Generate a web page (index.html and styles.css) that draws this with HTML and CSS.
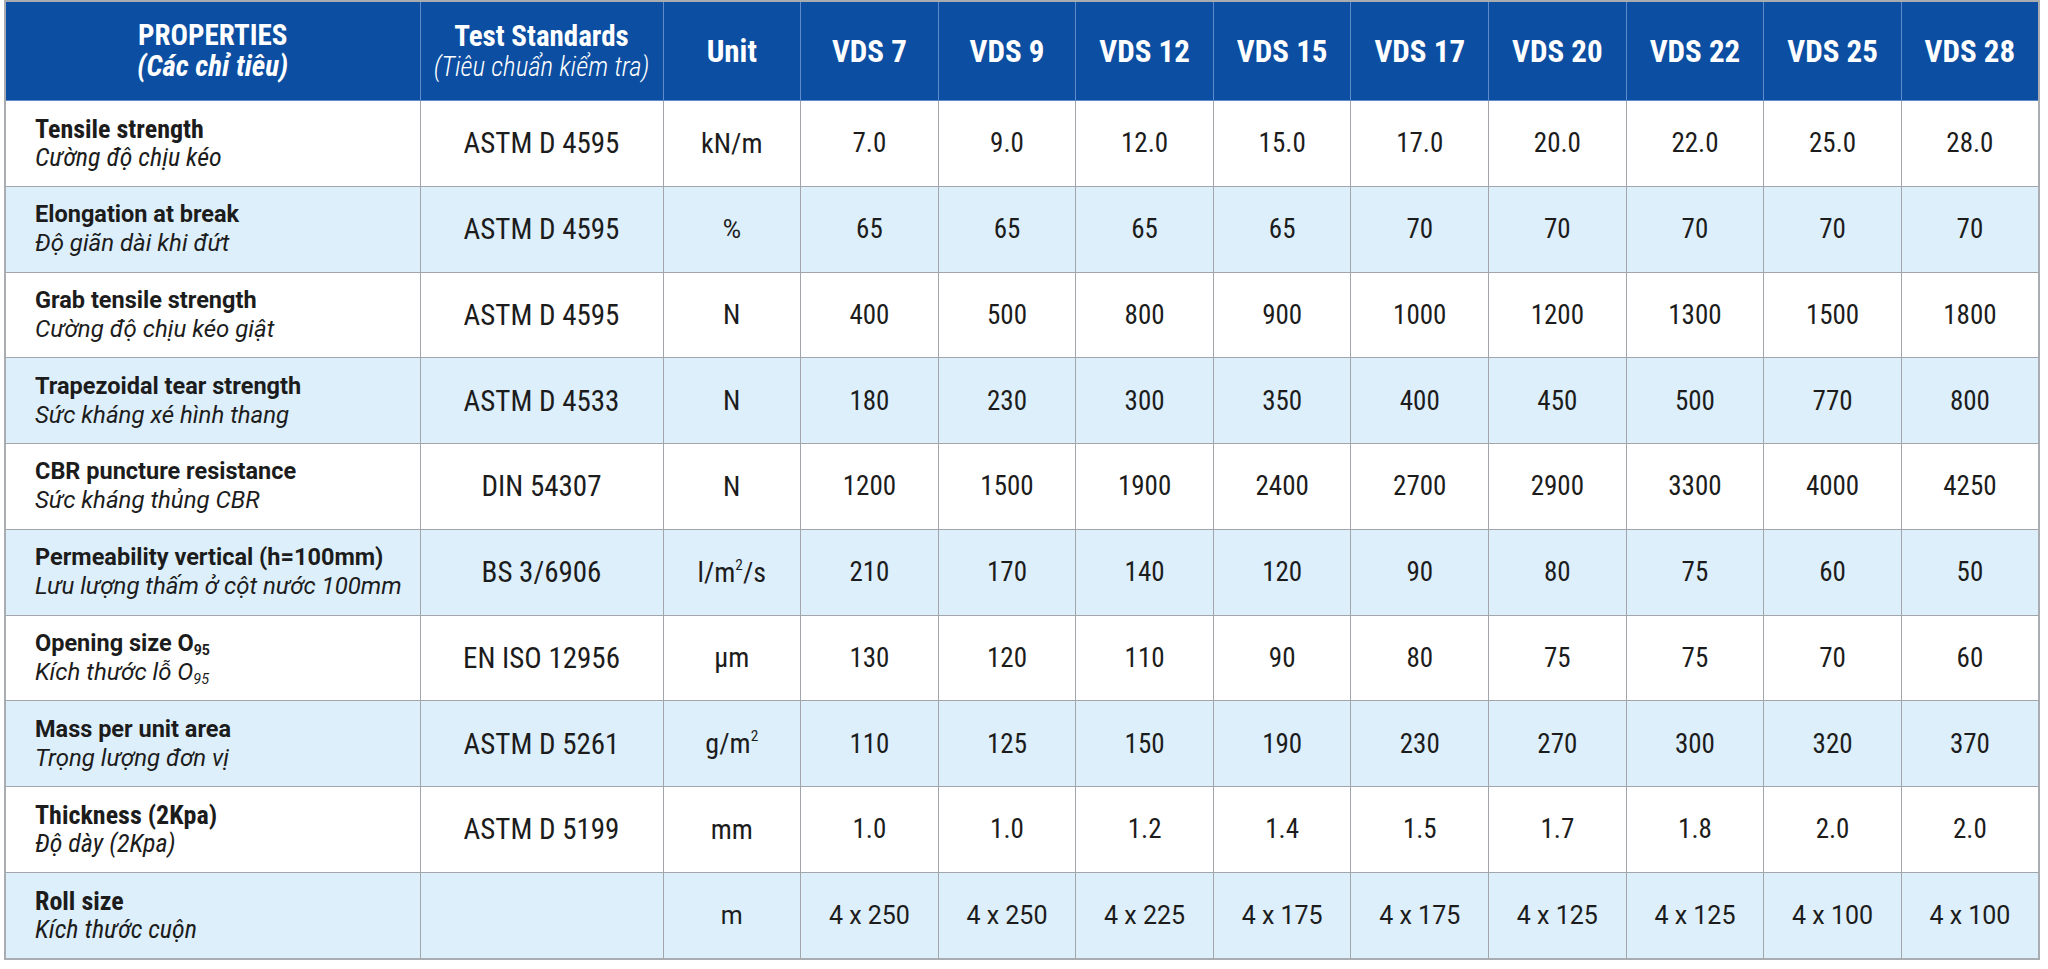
FILE: index.html
```html
<!DOCTYPE html>
<html lang="vi">
<head>
<meta charset="utf-8">
<title>VDS specifications</title>
<link rel="stylesheet" href="styles.css">
</head>
<body>
<div class="page">
<table class="spec">
  <colgroup>
    <col class="c-prop"><col class="c-std"><col class="c-val"><col class="c-val"><col class="c-val"><col class="c-val"><col class="c-val"><col class="c-val"><col class="c-val"><col class="c-val"><col class="c-val"><col class="c-val">
  </colgroup>
  <thead>
    <tr>
      <th><span class="h1">PROPERTIES</span><span class="h2b">(Các chỉ tiêu)</span></th>
      <th><span class="h1">Test Standards</span><span class="h2">(Tiêu chuẩn kiểm tra)</span></th>
      <th class="hv">Unit</th>
      <th class="hv">VDS 7</th>
      <th class="hv">VDS 9</th>
      <th class="hv">VDS 12</th>
      <th class="hv">VDS 15</th>
      <th class="hv">VDS 17</th>
      <th class="hv">VDS 20</th>
      <th class="hv">VDS 22</th>
      <th class="hv">VDS 25</th>
      <th class="hv">VDS 28</th>
    </tr>
  </thead>
  <tbody>
    <tr>
      <td class="prop cond"><b>Tensile strength</b><i>Cường độ chịu kéo</i></td>
      <td class="std">ASTM D 4595</td><td class="unit">kN/m</td>
      <td class="num">7.0</td><td class="num">9.0</td><td class="num">12.0</td><td class="num">15.0</td><td class="num">17.0</td><td class="num">20.0</td><td class="num">22.0</td><td class="num">25.0</td><td class="num">28.0</td>
    </tr>
    <tr class="alt">
      <td class="prop"><b>Elongation at break</b><i>Độ giãn dài khi đứt</i></td>
      <td class="std">ASTM D 4595</td><td>%</td>
      <td class="num">65</td><td class="num">65</td><td class="num">65</td><td class="num">65</td><td class="num">70</td><td class="num">70</td><td class="num">70</td><td class="num">70</td><td class="num">70</td>
    </tr>
    <tr>
      <td class="prop"><b>Grab tensile strength</b><i>Cường độ chịu kéo giật</i></td>
      <td class="std">ASTM D 4595</td><td class="unit">N</td>
      <td class="num">400</td><td class="num">500</td><td class="num">800</td><td class="num">900</td><td class="num">1000</td><td class="num">1200</td><td class="num">1300</td><td class="num">1500</td><td class="num">1800</td>
    </tr>
    <tr class="alt">
      <td class="prop"><b>Trapezoidal tear strength</b><i>Sức kháng xé hình thang</i></td>
      <td class="std">ASTM D 4533</td><td class="unit">N</td>
      <td class="num">180</td><td class="num">230</td><td class="num">300</td><td class="num">350</td><td class="num">400</td><td class="num">450</td><td class="num">500</td><td class="num">770</td><td class="num">800</td>
    </tr>
    <tr>
      <td class="prop"><b>CBR puncture resistance</b><i>Sức kháng thủng CBR</i></td>
      <td class="std">DIN 54307</td><td class="unit">N</td>
      <td class="num">1200</td><td class="num">1500</td><td class="num">1900</td><td class="num">2400</td><td class="num">2700</td><td class="num">2900</td><td class="num">3300</td><td class="num">4000</td><td class="num">4250</td>
    </tr>
    <tr class="alt">
      <td class="prop"><b>Permeability vertical (h=100mm)</b><i>Lưu lượng thấm ở cột nước 100mm</i></td>
      <td class="std">BS 3/6906</td><td class="unit">l/m<sup>2</sup>/s</td>
      <td class="num">210</td><td class="num">170</td><td class="num">140</td><td class="num">120</td><td class="num">90</td><td class="num">80</td><td class="num">75</td><td class="num">60</td><td class="num">50</td>
    </tr>
    <tr>
      <td class="prop"><b>Opening size O<sub>95</sub></b><i>Kích thước lỗ O<sub>95</sub></i></td>
      <td class="std">EN ISO 12956</td><td class="unit">µm</td>
      <td class="num">130</td><td class="num">120</td><td class="num">110</td><td class="num">90</td><td class="num">80</td><td class="num">75</td><td class="num">75</td><td class="num">70</td><td class="num">60</td>
    </tr>
    <tr class="alt">
      <td class="prop"><b>Mass per unit area</b><i>Trọng lượng đơn vị</i></td>
      <td class="std">ASTM D 5261</td><td class="unit">g/m<sup>2</sup></td>
      <td class="num">110</td><td class="num">125</td><td class="num">150</td><td class="num">190</td><td class="num">230</td><td class="num">270</td><td class="num">300</td><td class="num">320</td><td class="num">370</td>
    </tr>
    <tr>
      <td class="prop cond"><b>Thickness (2Kpa)</b><i>Độ dày (2Kpa)</i></td>
      <td class="std">ASTM D 5199</td><td class="unit">mm</td>
      <td class="num">1.0</td><td class="num">1.0</td><td class="num">1.2</td><td class="num">1.4</td><td class="num">1.5</td><td class="num">1.7</td><td class="num">1.8</td><td class="num">2.0</td><td class="num">2.0</td>
    </tr>
    <tr class="alt">
      <td class="prop cond"><b>Roll size</b><i>Kích thước cuộn</i></td>
      <td></td><td>m</td>
      <td>4 x 250</td><td>4 x 250</td><td>4 x 225</td><td>4 x 175</td><td>4 x 175</td><td>4 x 125</td><td>4 x 125</td><td>4 x 100</td><td>4 x 100</td>
    </tr>
  </tbody>
</table>
</div>
</body>
</html>
```

FILE: styles.css
```css
html, body {
  margin: 0;
  padding: 0;
  background: #ffffff;
}

.page {
  padding: 0 10px 0 4px;
  font-family: Roboto, "Noto Sans", "Liberation Sans", sans-serif;
  color: #1c1c1c;
}

.spec {
  width: 2034px;
  table-layout: fixed;
  border-collapse: collapse;
  border: 2px solid #a9adb1;
}

.c-prop { width: 415px; }
.c-std { width: 243px; }
.c-val { width: 137.6px; }

.spec th {
  height: 98px;
  background: #0b4ea2;
  color: #ffffff;
  border: 1px solid #5f8cc8;
  border-top-color: #a9adb1;
  text-align: center;
  vertical-align: middle;
  padding: 0;
  font-weight: 700;
  font-stretch: 80%;
}

.h1 {
  display: block;
  font-size: 29px;
  line-height: 31px;
}

.h2b {
  display: block;
  font-size: 29px;
  line-height: 31px;
  font-style: italic;
}

.h2 {
  display: block;
  font-size: 27px;
  line-height: 30px;
  font-style: italic;
  font-weight: 300;
}

.hv {
  font-size: 31px;
}

.spec td {
  height: 84.75px;
  border: 1px solid #a2a6aa;
  text-align: center;
  vertical-align: middle;
  padding: 0;
  font-size: 25px;
  background: #ffffff;
}

.spec tr.alt td {
  background: #ddeffb;
}

.spec td.std {
  font-size: 29px;
  font-stretch: 87%;
}

.spec td.unit {
  font-size: 28px;
  font-stretch: 85%;
}

.spec td.num {
  font-size: 27px;
  font-stretch: 80%;
}

.spec td.prop {
  text-align: left;
  padding: 0 0 0 29px;
}

.prop b {
  display: block;
  font-size: 23.5px;
  font-weight: 700;
  line-height: 29px;
}

.prop i {
  display: block;
  font-size: 24px;
  font-style: italic;
  line-height: 29px;
}

.spec td.prop.cond b,
.spec td.prop.cond i {
  font-size: 26px;
  font-stretch: 80%;
  line-height: 28px;
}

sup {
  font-size: 0.55em;
  line-height: 0;
  vertical-align: 0.75em;
}

sub {
  font-size: 0.6em;
  line-height: 0;
  vertical-align: -0.3em;
}
```
